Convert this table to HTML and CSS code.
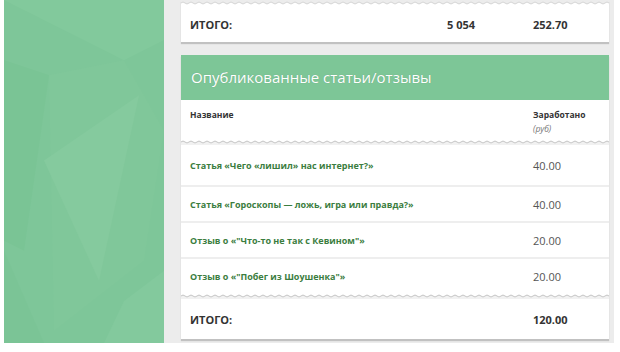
FILE: index.html
```html
<!DOCTYPE html>
<html lang="ru">
<head>
<meta charset="utf-8">
<link rel="stylesheet" href="styles.css">
</head>
<body>
<div class="page">
  <aside class="side">
    <svg class="facets" viewBox="0 0 160 342" preserveAspectRatio="none">
      <polygon points="0,0 160,0 160,40 120,60" fill="#82c99c"/>
      <polygon points="0,60 45,75 20,250 0,240" fill="#7ac495"/>
      <polygon points="45,75 120,60 160,130 140,260 50,330" fill="#80c79a"/>
      <polygon points="40,160 135,95 95,280" fill="#85ca9e"/>
      <polygon points="0,250 40,342 0,342" fill="#7bc496"/>
      <polygon points="120,300 160,270 160,342 100,342" fill="#83c99d"/>
    </svg>
  </aside>
  <main class="main">
    <section class="card total-card">
      <div class="wave wave-top"></div>
      <div class="row total-row">
        <span class="c-name">ИТОГО:</span>
        <span class="c-mid">5 054</span>
        <span class="c-sum">252.70</span>
      </div>
    </section>

    <section class="card list-card">
      <h2 class="title">Опубликованные статьи/отзывы</h2>
      <div class="row head-row">
        <span class="c-name">Название</span>
        <span class="c-sum">Заработано<em>(руб)</em></span>
      </div>
      <div class="wave"></div>
      <div class="row item"><span class="c-name link">Статья «Чего «лишил» нас интернет?»</span><span class="c-sum num">40.00</span></div>
      <div class="row item"><span class="c-name link">Статья «Гороскопы — ложь, игра или правда?»</span><span class="c-sum num">40.00</span></div>
      <div class="row item"><span class="c-name link">Отзыв о «"Что-то не так с Кевином"»</span><span class="c-sum num">20.00</span></div>
      <div class="row item"><span class="c-name link">Отзыв о «"Побег из Шоушенка"»</span><span class="c-sum num">20.00</span></div>
      <div class="wave"></div>
      <div class="row total-row last">
        <span class="c-name">ИТОГО:</span>
        <span class="c-sum">120.00</span>
      </div>
    </section>
  </main>
</div>
</body>
</html>
```

FILE: styles.css
```css
* { box-sizing: border-box; }
html, body { margin: 0; padding: 0; }
body {
  width: 620px;
  height: 352px;
  overflow: hidden;
  background: #ffffff;
  font-family: "Open Sans", "DejaVu Sans", sans-serif;
  color: #333;
}
.page {
  display: flex;
  height: 343px;
  padding-left: 4px;
  padding-right: 6px;
}
.side {
  width: 160px;
  flex: none;
  background: #7ec699;
}
.facets { display: block; width: 100%; height: 100%; }
.main {
  flex: 1;
  background: #ececec;
  padding: 0 5px 0 17px;
  display: flex;
  flex-direction: column;
}
.card {
  background: #fff;
  box-shadow: 0 2px 1px rgba(0,0,0,0.18);
}
.total-card {
  background: #fff;
  height: 42px;
}
.wave {
  height: 6px;
  background: #f1f1f1 url("data:image/svg+xml;utf8,<svg xmlns='http://www.w3.org/2000/svg' width='8' height='6'><path d='M0 0H8V3Q6 5 4 3T0 3Z' fill='white'/><path d='M0 3Q2 1 4 3T8 3' fill='none' stroke='%23c4c4c4' stroke-width='1'/></svg>") repeat-x 0 0;
}
.wave-top {
  background: #fff url("data:image/svg+xml;utf8,<svg xmlns='http://www.w3.org/2000/svg' width='8' height='6'><path d='M0 0H8V3Q6 5 4 3T0 3Z' fill='%23ececec'/><path d='M0 3Q2 1 4 3T8 3' fill='none' stroke='%23d4d4d4' stroke-width='1'/></svg>") repeat-x 0 0;
}
.row {
  display: flex;
  align-items: center;
  padding-left: 9px;
}
.c-name { flex: 1; }
.c-mid { width: 86px; }
.c-sum { width: 76px; }
.total-row {
  height: 36px;
  font-size: 11px;
  font-weight: 700;
  color: #333;
}
.total-card .total-row { height: 34px; padding-top: 3px; }
.list-card { margin-top: 13px; }
.title {
  margin: 0;
  height: 45px;
  background: #7dc697;
  color: #fff;
  font-size: 15px;
  font-weight: 400;
  padding: 12px 0 0 10px;
  text-shadow: 0 0 1px rgba(0,0,0,0.2);
}
.head-row {
  height: 39px;
  align-items: flex-start;
  padding-top: 9px;
  font-size: 8.5px;
  font-weight: 700;
  color: #333;
}
.head-row em {
  display: block;
  font-style: italic;
  font-weight: 400;
  color: #777;
  margin-top: 3px;
}
.item {
  height: 36px;
  border-top: 2px solid #eeeeee;
}
.wave + .item { border-top: none; height: 40px; }
.link {
  font-size: 9px;
  font-weight: 700;
  color: #3b7d40;
}
.num {
  font-size: 11px;
  color: #555;
}
.last { height: 40px; }
```
